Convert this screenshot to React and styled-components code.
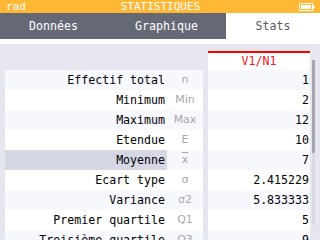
import React from 'react'
import styled, { createGlobalStyle } from 'styled-components'

const GlobalStyle = createGlobalStyle`
  html, body {
    margin: 0;
    padding: 0;
  }
  body {
    width: 320px;
    height: 240px;
    overflow: hidden;
    background: #e6e6ef;
    font-family: 'DejaVu Sans Mono', 'Liberation Mono', monospace;
  }
`

const rows = [
  { label: 'Effectif total', symbol: 'n', value: '1' },
  { label: 'Minimum', symbol: 'Min', value: '2' },
  { label: 'Maximum', symbol: 'Max', value: '12' },
  { label: 'Etendue', symbol: 'E', value: '10' },
  { label: 'Moyenne', symbol: 'x', bar: true, value: '7', selected: true },
  { label: 'Ecart type', symbol: 'σ', value: '2.415229' },
  { label: 'Variance', symbol: 'σ2', value: '5.833333' },
  { label: 'Premier quartile', symbol: 'Q1', value: '5' },
  { label: 'Troisième quartile', symbol: 'Q3', value: '9' },
]

const tabs = [
  { name: 'Données', width: 107 },
  { name: 'Graphique', width: 119 },
  { name: 'Stats', width: 94, active: true },
]

const Battery = () => (
  <svg width='16' height='8' viewBox='0 0 16 8'>
    <rect x='0.5' y='0.5' width='13' height='7' fill='none' stroke='#fff' />
    <rect x='2' y='2' width='10' height='4' fill='#fff' />
    <rect x='14' y='2.5' width='1.5' height='3' fill='#fff' />
  </svg>
)

const App = () => {
  return (
    <>
      <GlobalStyle />
      <Screen>
        <Header>
          <span>rad</span>
          <Title>STATISTIQUES</Title>
          <Battery />
        </Header>
        <TabBar>
          {tabs.map((tab) => (
            <Tab key={tab.name} $width={tab.width} $active={tab.active}>
              {tab.name}
            </Tab>
          ))}
        </TabBar>
        <Content>
          <Table>
            <LabelColumn>
              {rows.map((row, i) => (
                <Row key={row.label} $odd={i % 2 === 0}>
                  <Label $selected={row.selected}>{row.label}</Label>
                  <Symbol>
                    {row.bar ? <Mean>{row.symbol}</Mean> : row.symbol}
                  </Symbol>
                </Row>
              ))}
            </LabelColumn>
            <ValueColumn>
              <ColumnTitle>V1/N1</ColumnTitle>
              {rows.map((row, i) => (
                <Value key={row.label} $odd={i % 2 === 0}>
                  {row.value}
                </Value>
              ))}
            </ValueColumn>
          </Table>
          <ScrollTrack>
            <ScrollThumb />
          </ScrollTrack>
        </Content>
      </Screen>
    </>
  )
}

const Screen = styled.div`
  width: 320px;
  height: 240px;
  overflow: hidden;
  display: flex;
  flex-direction: column;
`
const Header = styled.div`
  height: 13px;
  flex-shrink: 0;
  background: #ffb734;
  color: #fff;
  font-size: 11px;
  line-height: 13px;
  display: flex;
  align-items: center;
  padding: 0 5px 0 6px;
  span {
    width: 40px;
  }
`
const Title = styled.div`
  flex: 1;
  text-align: center;
  padding-right: 24px;
`
const TabBar = styled.div`
  height: 26px;
  flex-shrink: 0;
  display: flex;
  background: #656975;
`
const Tab = styled.div`
  width: ${(p) => p.$width}px;
  display: flex;
  align-items: center;
  justify-content: center;
  font-size: 11.6px;
  color: ${(p) => (p.$active ? '#5c5c5c' : '#fff')};
  background: ${(p) => (p.$active ? '#fff' : 'transparent')};
`
const Content = styled.div`
  flex: 1;
  display: flex;
  padding: 7px 0 0 5px;
  border-top: 5px solid #fff;
  overflow: hidden;
`
const Table = styled.div`
  display: flex;
  gap: 5px;
  width: 305px;
`
const LabelColumn = styled.div`
  width: 198px;
  padding-top: 19px;
`
const Row = styled.div`
  height: 20px;
  display: flex;
  background: ${(p) => (p.$odd ? '#f6f8fe' : '#fff')};
`
const Label = styled.div`
  width: 162px;
  padding-right: 2px;
  box-sizing: border-box;
  text-align: right;
  font-size: 11.6px;
  line-height: 20px;
  color: #000;
  background: ${(p) => (p.$selected ? '#d5d7e5' : 'transparent')};
  white-space: nowrap;
`
const Symbol = styled.div`
  flex: 1;
  text-align: center;
  font-family: 'DejaVu Sans', sans-serif;
  font-size: 11px;
  line-height: 20px;
  color: #a8a8a8;
`
const Mean = styled.span`
  text-decoration: overline;
`
const ValueColumn = styled.div`
  width: 102px;
`
const ColumnTitle = styled.div`
  height: 17px;
  border-top: 2px solid #ff0000;
  background: #fff;
  color: #f0141e;
  font-size: 11.6px;
  line-height: 17px;
  text-align: center;
`
const Value = styled.div`
  height: 20px;
  padding-right: 1px;
  text-align: right;
  font-size: 11.6px;
  line-height: 20px;
  color: #000;
  background: ${(p) => (p.$odd ? '#f6f8fe' : '#fff')};
`
const ScrollTrack = styled.div`
  width: 3px;
  height: 165px;
  margin: 9px 0 0 2px;
  background: #d9d9e1;
`
const ScrollThumb = styled.div`
  height: 93px;
  background: #a6a6ae;
`

export default App
